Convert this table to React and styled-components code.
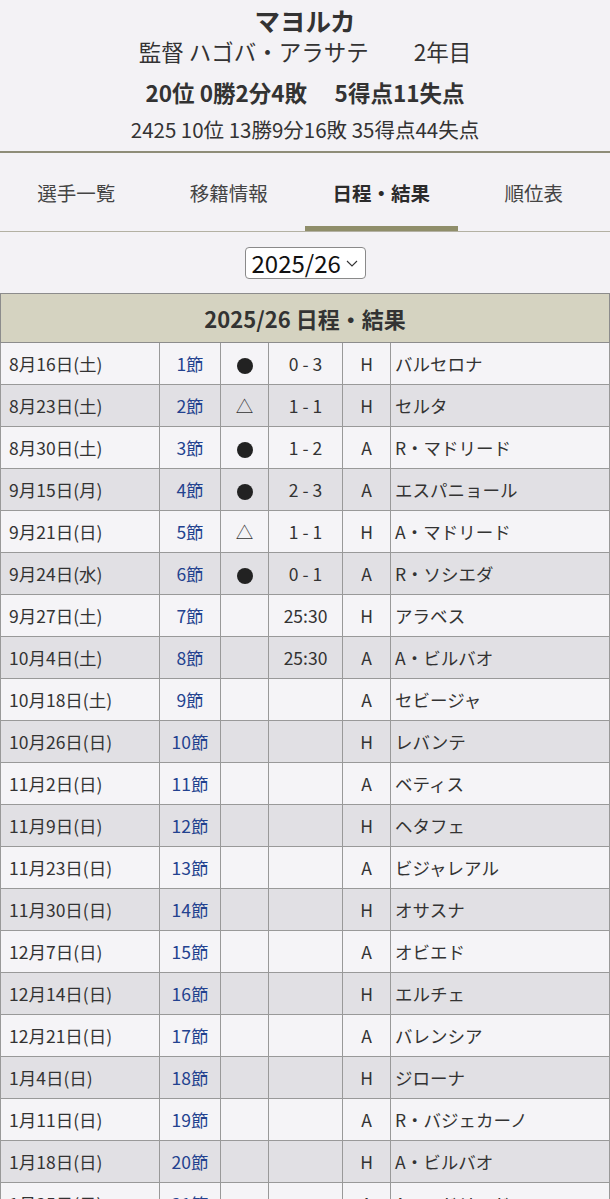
import React, { useState } from "react";
import styled, { createGlobalStyle } from "styled-components";

const GlobalStyle = createGlobalStyle`
  html, body {
    margin: 0;
    padding: 0;
    background: #f3f2f5;
  }
  body {
    font-family: "Noto Sans CJK JP", "Noto Sans", sans-serif;
    color: #333;
  }
`;

const TABS = ["選手一覧", "移籍情報", "日程・結果", "順位表"];

const MATCHES = [
  ["8月16日(土)", 1, "●", "0 - 3", "H", "バルセロナ"],
  ["8月23日(土)", 2, "△", "1 - 1", "H", "セルタ"],
  ["8月30日(土)", 3, "●", "1 - 2", "A", "R・マドリード"],
  ["9月15日(月)", 4, "●", "2 - 3", "A", "エスパニョール"],
  ["9月21日(日)", 5, "△", "1 - 1", "H", "A・マドリード"],
  ["9月24日(水)", 6, "●", "0 - 1", "A", "R・ソシエダ"],
  ["9月27日(土)", 7, "", "25:30", "H", "アラベス"],
  ["10月4日(土)", 8, "", "25:30", "A", "A・ビルバオ"],
  ["10月18日(土)", 9, "", "", "A", "セビージャ"],
  ["10月26日(日)", 10, "", "", "H", "レバンテ"],
  ["11月2日(日)", 11, "", "", "A", "ベティス"],
  ["11月9日(日)", 12, "", "", "H", "ヘタフェ"],
  ["11月23日(日)", 13, "", "", "A", "ビジャレアル"],
  ["11月30日(日)", 14, "", "", "H", "オサスナ"],
  ["12月7日(日)", 15, "", "", "A", "オビエド"],
  ["12月14日(日)", 16, "", "", "H", "エルチェ"],
  ["12月21日(日)", 17, "", "", "A", "バレンシア"],
  ["1月4日(日)", 18, "", "", "H", "ジローナ"],
  ["1月11日(日)", 19, "", "", "A", "R・バジェカーノ"],
  ["1月18日(日)", 20, "", "", "H", "A・ビルバオ"],
  ["1月25日(日)", 21, "", "", "A", "A・マドリード"],
];

export default function App() {
  const [season, setSeason] = useState("2025/26");
  return (
    <Page>
      <GlobalStyle />
      <Header>
        <Title>マヨルカ</Title>
        <Manager>監督 ハゴバ・アラサテ　　2年目</Manager>
        <Record>20位 0勝2分4敗　 5得点11失点</Record>
        <PrevRecord>2425 10位 13勝9分16敗 35得点44失点</PrevRecord>
      </Header>
      <TabBar>
        {TABS.map((t) => (
          <Tab key={t} $active={t === "日程・結果"}>
            {t}
          </Tab>
        ))}
      </TabBar>
      <SelectRow>
        <SelectWrap>
          <SeasonSelect value={season} onChange={(e) => setSeason(e.target.value)}>
            <option>2025/26</option>
            <option>2024/25</option>
          </SeasonSelect>
          <Chevron viewBox="0 0 12 7" width="12" height="7">
            <path d="M1 1l5 5 5-5" fill="none" stroke="#333" strokeWidth="1.1" />
          </Chevron>
        </SelectWrap>
      </SelectRow>
      <Table>
        <colgroup>
          <col style={{ width: 159 }} />
          <col style={{ width: 61 }} />
          <col style={{ width: 48 }} />
          <col style={{ width: 74 }} />
          <col style={{ width: 48 }} />
          <col />
        </colgroup>
        <thead>
          <tr>
            <HeadCell colSpan={6}>2025/26 日程・結果</HeadCell>
          </tr>
        </thead>
        <tbody>
          {MATCHES.map(([date, sec, res, score, ha, opp], i) => (
            <Row key={sec} $even={i % 2 === 1}>
              <Cell>{date}</Cell>
              <Cell $center>
                <SecLink>{sec}節</SecLink>
              </Cell>
              <Cell $center>{res === "●" ? <Dot /> : res}</Cell>
              <Cell $center>{score}</Cell>
              <Cell $center>{ha}</Cell>
              <Cell $opp>{opp}</Cell>
            </Row>
          ))}
        </tbody>
      </Table>
    </Page>
  );
}

const Page = styled.div`
  width: 610px;
  background: #f3f2f5;
`;

const Header = styled.header`
  display: flex;
  flex-direction: column;
  align-items: center;
  padding: 4px 0 7px;
  border-bottom: 2px solid #8e8d78;
`;

const Title = styled.h1`
  margin: 0;
  font-size: 25.5px;
  line-height: 32px;
  font-weight: 700;
`;

const Manager = styled.div`
  font-size: 22.5px;
  line-height: 30px;
`;

const Record = styled.div`
  margin-top: 10px;
  font-size: 22.5px;
  line-height: 32px;
  font-weight: 700;
`;

const PrevRecord = styled.div`
  margin-top: 6px;
  font-size: 20.5px;
  line-height: 30px;
`;

const TabBar = styled.nav`
  display: grid;
  grid-template-columns: repeat(4, 1fr);
  height: 78px;
  border-bottom: 1px solid #b3b1a3;
`;

const Tab = styled.div`
  display: flex;
  align-items: center;
  justify-content: center;
  box-sizing: border-box;
  padding-top: ${({ $active }) => ($active ? "5px" : "0")};
  font-size: 19.5px;
  font-weight: ${({ $active }) => ($active ? 700 : 400)};
  color: ${({ $active }) => ($active ? "#2b2b2b" : "#444")};
  border-bottom: ${({ $active }) => ($active ? "5px solid #8f8e6a" : "none")};
`;

const SelectRow = styled.div`
  display: flex;
  justify-content: center;
  padding: 15px 0 14px;
`;

const SelectWrap = styled.div`
  position: relative;
`;

const SeasonSelect = styled.select`
  appearance: none;
  -webkit-appearance: none;
  width: 121px;
  height: 32px;
  box-sizing: border-box;
  padding: 0 20px 0 6px;
  font-family: "Noto Sans CJK JP", "Noto Sans", sans-serif;
  font-size: 24px;
  line-height: 30px;
  color: #111;
  background: #fff;
  border: 1px solid #8a8a8a;
  border-radius: 4px;
`;

const Chevron = styled.svg`
  position: absolute;
  right: 8px;
  top: 13px;
  pointer-events: none;
`;

const Table = styled.table`
  width: 610px;
  table-layout: fixed;
  border-collapse: collapse;
  border: 1px solid #8c8c8c;
`;

const HeadCell = styled.th`
  height: 48px;
  padding: 0;
  background: #d5d3c1;
  font-size: 22px;
  font-weight: 700;
  color: #333;
  text-align: center;
  border: 1px solid #8c8c8c;
`;

const Row = styled.tr`
  background: ${({ $even }) => ($even ? "#e1e0e4" : "#f5f4f7")};
`;

const Cell = styled.td`
  height: 41px;
  padding: 0 ${({ $opp }) => ($opp ? "4px" : "8px")};
  font-size: 17.5px;
  color: #333;
  text-align: ${({ $center }) => ($center ? "center" : "left")};
  white-space: nowrap;
  overflow: hidden;
  border: 1px solid #999;
`;

const SecLink = styled.span`
  color: #23428f;
`;

const Dot = styled.span`
  display: inline-block;
  width: 16px;
  height: 16px;
  border-radius: 50%;
  background: #222;
  vertical-align: middle;
`;
